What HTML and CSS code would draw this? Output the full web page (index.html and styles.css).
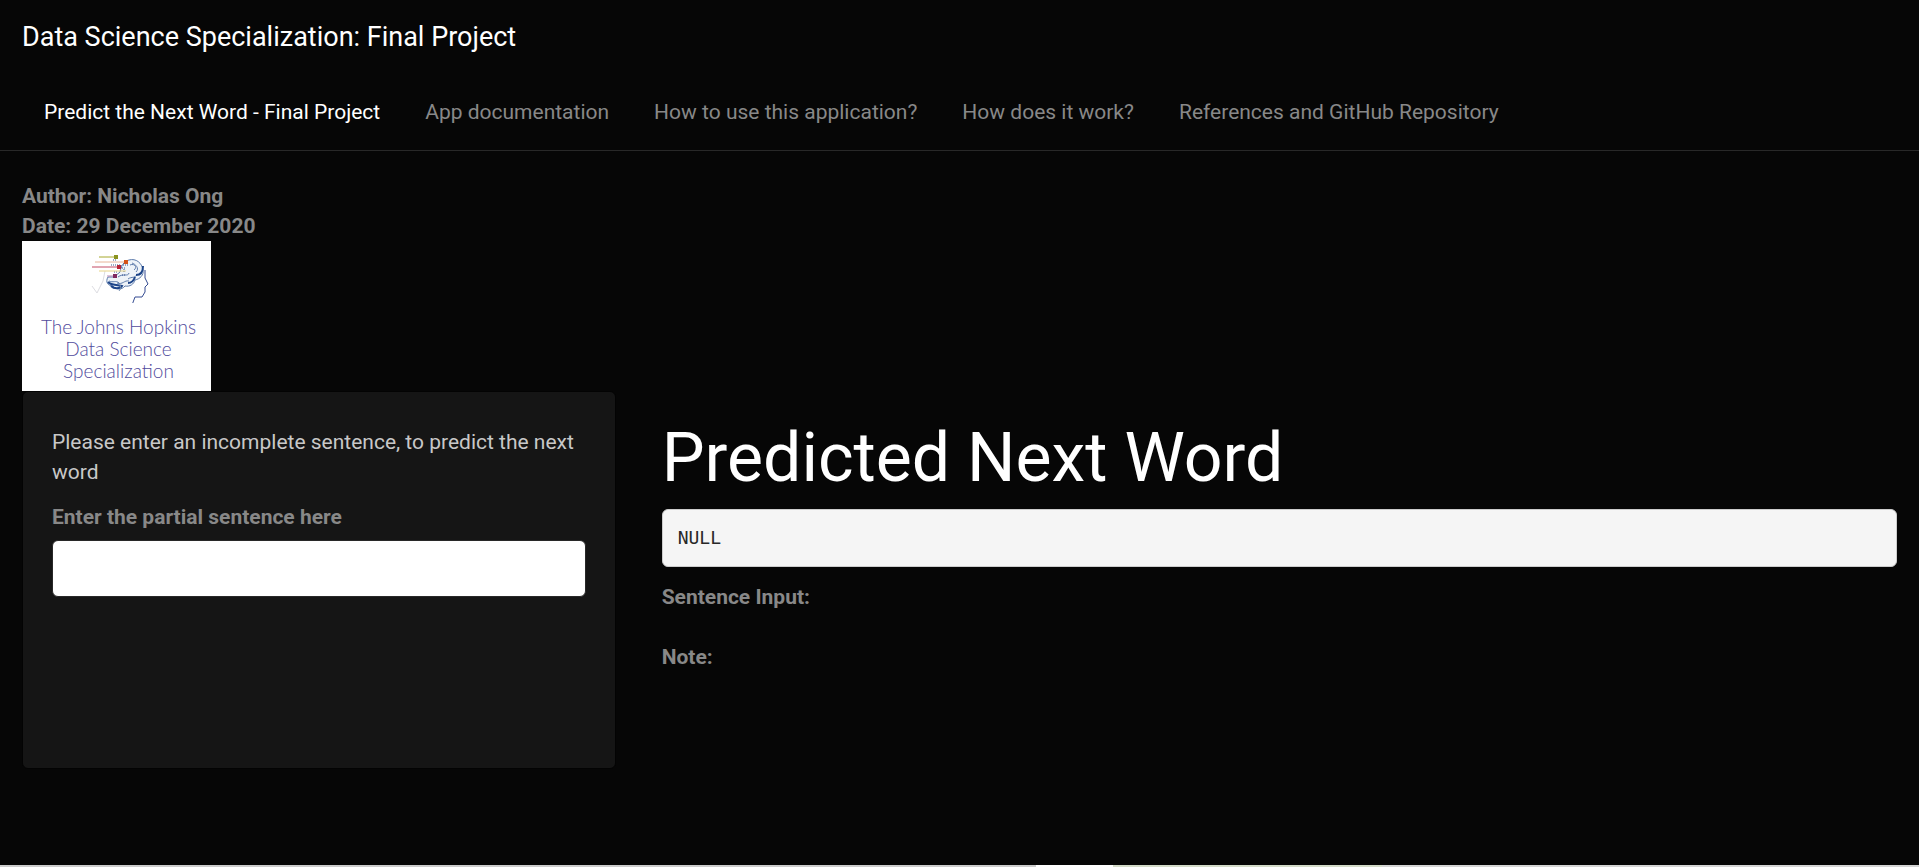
FILE: index.html
```html
<!DOCTYPE html>
<html lang="en">
<head>
<meta charset="utf-8">
<title>Data Science Specialization: Final Project</title>
<link rel="stylesheet" href="styles.css">
</head>
<body>
<header class="navbar">
  <a class="brand" href="#">Data Science Specialization: Final Project</a>
  <nav class="tabs">
    <a class="tab tab-active" href="#" aria-current="page">Predict the Next Word - Final Project</a>
    <a class="tab" href="#">App documentation</a>
    <a class="tab" href="#">How to use this application?</a>
    <a class="tab" href="#">How does it work?</a>
    <a class="tab" href="#">References and GitHub Repository</a>
  </nav>
</header>
<main class="content">
  <div class="intro">
    <strong>Author: Nicholas Ong</strong>
    <strong>Date: 29 December 2020</strong>
    <div class="logo">
      <svg class="logo-mark" viewBox="0 0 60 54" aria-hidden="true">
        <path d="M2 37l5 7 6-12 2-10" fill="none" stroke="#dddde2" stroke-width="1"/>
        <g fill="#eef3f8" stroke="#5d7bab" stroke-width="1">
          <path d="M18 28c-3 5 0 9 5 9 3 4 9 4 12 0 5 1 9-2 10-6 5-1 9-5 8-10-1-7-7-12-14-10-5 1-8 6-9 12l-6 5z"/>
          <path d="M19 32c4 2 7-1 10 2m-1-6c5-4 10 0 11-4m1-8c4-2 8 2 4 5m2 2c4-4-1-8-4-9m-4 16c4-3 7 0 9-5m-20 9c6 2 7-3 12-2" fill="none"/>
        </g>
        <path d="M18 33c4 4 9 2 14 4-2 3-8 3-11 0M38 34c4 0 6-3 7-6M46 26c5 0 7-4 7-9" fill="none" stroke="#1d458a" stroke-width="2"/>
        <path d="M21 16h9m2 3h3m-11 4h3m6-7h5m-6 10h4m-13-15h3m5 5v3m3 1v3" stroke="#36558f" stroke-width="1" stroke-dasharray="1 1"/>
        <path d="M55 21v8l3 6-3 3v5l-3 5h-7l-3 8" fill="none" stroke="#344b91" stroke-width="1"/>
        <path d="M30 36l1 3-2 3" fill="none" stroke="#7890b0" stroke-width="1"/>
        <path d="M9 8h17" stroke="#a6a82d"/><path d="M5 13h32" stroke="#e8b49a"/>
        <path d="M2 18h27" stroke="#c34a64"/><path d="M9 22h27" stroke="#e8d587"/><path d="M17 27h8" stroke="#b98bb7"/>
        <path d="M24 6h4v4h-4z" fill="#8a931f"/><path d="M34 11h4v4h-4z" fill="#d45318"/>
        <path d="M27 16h4v4h-4z" fill="#b82338"/><path d="M23 25h4v4h-4z" fill="#7f2860"/>
      </svg>
      <span class="logo-text">The Johns Hopkins<br>Data Science<br>Specialization</span>
    </div>
  </div>
  <div class="row">
    <form class="well">
      <p class="help">Please enter an incomplete sentence, to predict the next word</p>
      <label class="label" for="sentence">Enter the partial sentence here</label>
      <input class="field" id="sentence" type="text">
    </form>
    <section class="result">
      <h1 class="heading">Predicted Next Word</h1>
      <pre class="output">NULL</pre>
      <strong>Sentence Input:</strong>
      <strong class="note">Note:</strong>
    </section>
  </div>
</main>
<div class="edge"></div>
</body>
</html>
```
FILE: styles.css
```css
* { box-sizing: border-box; }
body {
  display: flex;
  flex-direction: column;
  min-height: 100vh;
  margin: 0;
  background: #060606;
  color: #888888;
  font: 21px/30px Roboto, "Liberation Sans", sans-serif;
}
.navbar { border-bottom: 1px solid #282828; }
.brand {
  display: block;
  width: fit-content;
  padding: 22px;
  color: #ffffff;
  font-size: 27px;
  text-decoration: none;
}
.tabs { display: flex; gap: 1px; padding: 1px 22px; }
.tab { padding: 22px; color: #888888; text-decoration: none; }
.tab-active { color: #ffffff; }
.content { flex: 1; padding-top: 30px; }
.intro { display: flex; flex-direction: column; padding: 0 22px; }
.logo {
  display: flex;
  flex-direction: column;
  align-items: center;
  width: 189px;
  height: 150px;
  padding-top: 8px;
  background: #ffffff;
}
.logo-mark { width: 60px; height: 54px; margin-left: 6px; }
.logo-text {
  padding: 13px 0 0 4px;
  color: #514b9c;
  font: 300 19px/22px Lato, sans-serif;
  text-align: center;
  white-space: nowrap;
}
.row { display: grid; grid-template-columns: 1fr 2fr; }
.well {
  min-height: 378px;
  margin: 0 24px 0 22px;
  padding: 35px 29px 28px;
  border: 1px solid #030303;
  border-radius: 6px;
  background: #151515;
}
.help { margin: 0 0 15px; color: #c8c8c8; }
.label { display: block; margin-bottom: 8px; font-weight: 700; }
.field {
  display: block;
  width: 100%;
  height: 57px;
  padding: 12px 18px;
  border: 1px solid #282828;
  border-radius: 6px;
  background: #ffffff;
  color: #555555;
  font: inherit;
}
.result { display: flex; flex-direction: column; padding: 30px 22px 0; }
.heading { margin: 0 0 14px; color: #ffffff; font-size: 68px; line-height: 74px; font-weight: 400; }
.output {
  margin: 0 0 15px;
  padding: 14px 15px;
  border: 1px solid #cccccc;
  border-radius: 6px;
  background: #f5f5f5;
  color: #282828;
  font: 18px/28px "DejaVu Sans Mono", monospace;
}
.note { margin-top: 30px; }
.edge {
  height: 2px;
  background: linear-gradient(90deg, #cccccc 54%, #ffffff 54% 58%, #d3dac8 58% 72%, #d4d4d4 72%);
}
```
